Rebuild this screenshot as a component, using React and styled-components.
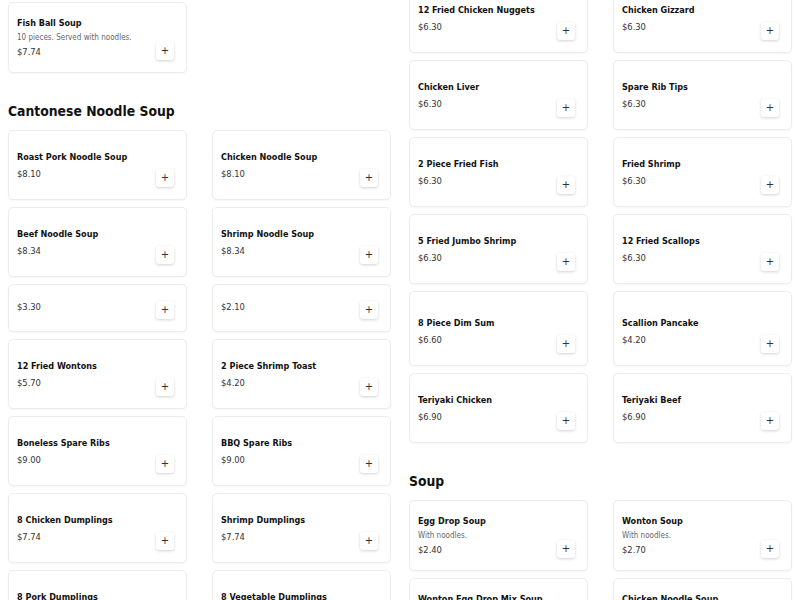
import React from 'react';
import styled, { createGlobalStyle } from 'styled-components';

const GlobalStyle = createGlobalStyle`
  html, body {
    margin: 0;
    padding: 0;
    background: #fff;
    overflow: hidden;
  }
  body {
    font-family: "DejaVu Sans Condensed", "DejaVu Sans", "Liberation Sans", sans-serif;
    font-stretch: condensed;
    color: #111;
  }
`;

const Page = styled.div`
  display: flex;
  gap: 18px;
  padding: 0 8px;
  align-items: flex-start;
`;

const Column = styled.div`
  flex: 1;
  display: flex;
  flex-direction: column;
  margin-top: ${(p) => p.$offset}px;
`;

const Section = styled.section`
  display: flex;
  flex-direction: column;
`;

const Heading = styled.h2`
  margin: 30px 0 10px;
  font-size: 13.8px;
  line-height: 17px;
  font-weight: bold;
  color: #111;
`;

const Grid = styled.div`
  display: grid;
  grid-template-columns: 1fr 1fr;
  column-gap: 25px;
  row-gap: 7px;
`;

const Card = styled.div`
  box-sizing: border-box;
  display: flex;
  justify-content: space-between;
  align-items: flex-end;
  min-height: ${(p) => p.$h || 70}px;
  padding: ${(p) => p.$top || 12}px 12px 12px 8px;
  border: 1px solid #ececec;
  border-radius: 5px;
  background: #fff;
  box-shadow: 0 1px 2px rgba(0, 0, 0, 0.04);
`;

const Info = styled.div`
  align-self: stretch;
  display: flex;
  flex-direction: column;
  justify-content: center;
`;

const Name = styled.div`
  font-size: 9px;
  font-weight: bold;
  line-height: 16px;
  color: #111;
`;

const Desc = styled.div`
  font-size: 8px;
  line-height: 13px;
  color: #666;
`;

const Price = styled.div`
  font-size: 9.3px;
  line-height: 16px;
  margin-top: ${(p) => (p.$tight ? 0 : 1)}px;
  color: #333;
`;

const AddButton = styled.button`
  width: 18px;
  height: 18px;
  padding: 0;
  flex-shrink: 0;
  display: flex;
  align-items: center;
  justify-content: center;
  border: none;
  border-radius: 3px;
  background: #fff;
  box-shadow: 0 1px 3px rgba(0, 0, 0, 0.18);
  font-family: "DejaVu Sans", sans-serif;
  font-size: 10px;
  line-height: 1;
  color: #333;
  cursor: pointer;
`;

const Item = ({ name, desc, price, h, top }) => (
  <Card $h={h} $top={top}>
    <Info>
      {name && <Name>{name}</Name>}
      {desc && <Desc>{desc}</Desc>}
      <Price $tight={!!desc || !name}>{price}</Price>
    </Info>
    <AddButton>+</AddButton>
  </Card>
);

const fishBall = [{ name: 'Fish Ball Soup', desc: '10 pieces. Served with noodles.', price: '$7.74' }];

const cantonese = [
  { name: 'Roast Pork Noodle Soup', price: '$8.10' },
  { name: 'Chicken Noodle Soup', price: '$8.10' },
  { name: 'Beef Noodle Soup', price: '$8.34' },
  { name: 'Shrimp Noodle Soup', price: '$8.34' },
  { price: '$3.30', h: 48, top: 10 },
  { price: '$2.10', h: 48, top: 10 },
  { name: '12 Fried Wontons', price: '$5.70' },
  { name: '2 Piece Shrimp Toast', price: '$4.20' },
  { name: 'Boneless Spare Ribs', price: '$9.00' },
  { name: 'BBQ Spare Ribs', price: '$9.00' },
  { name: '8 Chicken Dumplings', price: '$7.74' },
  { name: 'Shrimp Dumplings', price: '$7.74' },
  { name: '8 Pork Dumplings', price: '$7.74' },
  { name: '8 Vegetable Dumplings', price: '$7.74' },
];

const fried = [
  { name: '12 Fried Chicken Nuggets', price: '$6.30' },
  { name: 'Chicken Gizzard', price: '$6.30' },
  { name: 'Chicken Liver', price: '$6.30' },
  { name: 'Spare Rib Tips', price: '$6.30' },
  { name: '2 Piece Fried Fish', price: '$6.30' },
  { name: 'Fried Shrimp', price: '$6.30' },
  { name: '5 Fried Jumbo Shrimp', price: '$6.30' },
  { name: '12 Fried Scallops', price: '$6.30' },
  { name: '8 Piece Dim Sum', price: '$6.60', h: 75, top: 17 },
  { name: 'Scallion Pancake', price: '$4.20', h: 75, top: 17 },
  { name: 'Teriyaki Chicken', price: '$6.90' },
  { name: 'Teriyaki Beef', price: '$6.90' },
];

const soup = [
  { name: 'Egg Drop Soup', desc: 'With noodles.', price: '$2.40' },
  { name: 'Wonton Soup', desc: 'With noodles.', price: '$2.70' },
  { name: 'Wonton Egg Drop Mix Soup', desc: 'With noodles.', price: '$3.00' },
  { name: 'Chicken Noodle Soup', desc: 'With noodles.', price: '$2.70' },
];

const renderItems = (items) => items.map((it, i) => <Item key={i} {...it} />);

export default function App() {
  return (
    <>
      <GlobalStyle />
      <Page>
        <Column $offset={2}>
          <Section>
            <Grid>{renderItems(fishBall)}</Grid>
          </Section>
          <Section>
            <Heading>Cantonese Noodle Soup</Heading>
            <Grid>{renderItems(cantonese)}</Grid>
          </Section>
        </Column>
        <Column $offset={-17}>
          <Section>
            <Grid>{renderItems(fried)}</Grid>
          </Section>
          <Section>
            <Heading>Soup</Heading>
            <Grid>{renderItems(soup)}</Grid>
          </Section>
        </Column>
      </Page>
    </>
  );
}
